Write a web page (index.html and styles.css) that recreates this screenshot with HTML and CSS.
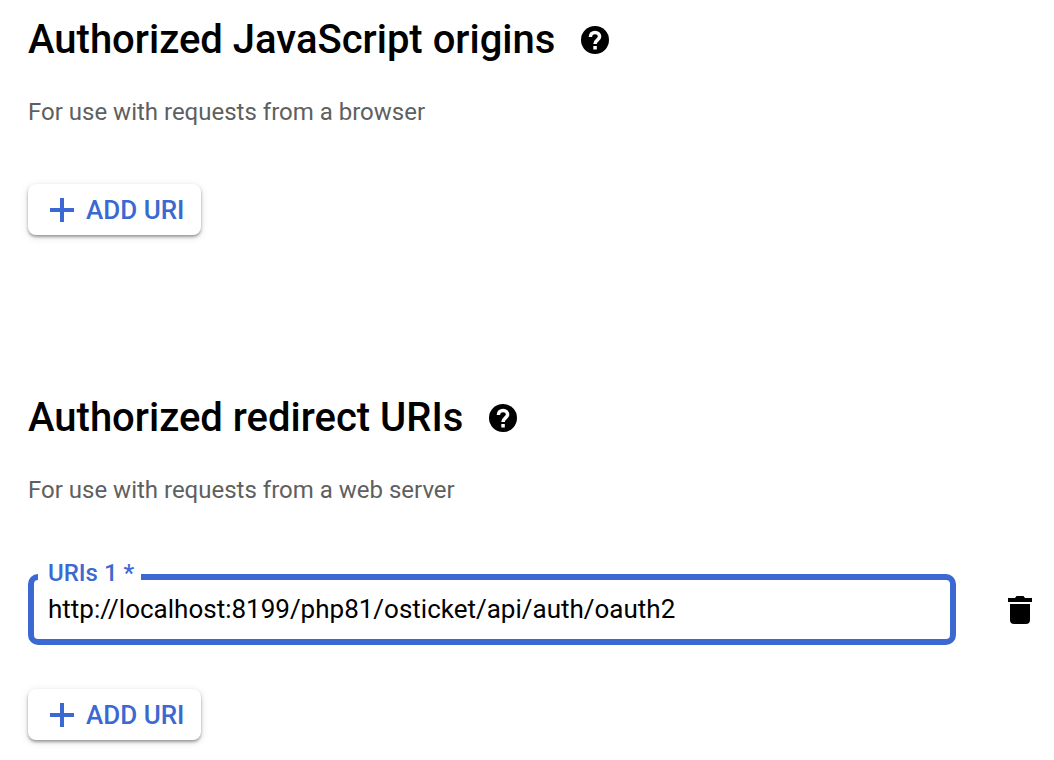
FILE: index.html
```
<!DOCTYPE html>
<html lang="en">
  <head>
    <meta charset="UTF-8" />
    <meta name="viewport" content="width=device-width, initial-scale=1.0" />
    <title>Authorized URIs</title>
    <link rel="stylesheet" href="styles.css">
  </head>
  <body>
    <main class="container">
      <section class="section">
        <header class="header">
          <h2>Authorized JavaScript origins</h2>
          <button type="button" class="icon-button" aria-label="Help: JavaScript origins">
            <svg width="28" height="28" viewBox="0 0 28 28">
              <circle cx="14" cy="14" r="14" />
              <path class="help-mark" d="M9.4 11c0-2.900 2-4.600 4.600-4.600s4.600 1.700 4.600 4.200c0 3.200-4.600 3.400-4.600 7.400" />
              <rect class="help-dot" x="12.300" y="20" width="3.500" height="3.500" />
            </svg>
          </button>
        </header>
        <p class="description">For use with requests from a browser</p>
        <button type="button" class="add-button">
          <svg width="24" height="24" viewBox="0 0 24 24"><path d="M10 0h4v10h10v4H14v10h-4V14H0v-4h10z" /></svg>
          ADD URI
        </button>
      </section>

      <section class="section">
        <header class="header">
          <h2>Authorized redirect URIs</h2>
          <button type="button" class="icon-button" aria-label="Help: redirect URIs">
            <svg width="28" height="28" viewBox="0 0 28 28">
              <circle cx="14" cy="14" r="14" />
              <path class="help-mark" d="M9.4 11c0-2.900 2-4.600 4.600-4.600s4.600 1.700 4.600 4.200c0 3.200-4.600 3.400-4.600 7.400" />
              <rect class="help-dot" x="12.300" y="20" width="3.500" height="3.500" />
            </svg>
          </button>
        </header>
        <p class="description">For use with requests from a web server</p>
        <div class="uri-row">
          <div class="field">
            <label for="uri1">URIs 1 *</label>
            <input type="text" id="uri1" value="http://localhost:8199/php81/osticket/api/auth/oauth2" spellcheck="false" required />
          </div>
          <button type="button" class="icon-button" aria-label="Delete URI">
            <svg width="24" height="28" viewBox="0 0 24 28">
              <path d="M0 2h7l1.500-2h7L17 2h7v4H0z" />
              <path d="M2 8h20v16c0 2.500-1.500 4-4 4H6c-2.500 0-4-1.500-4-4z" />
            </svg>
          </button>
        </div>
        <button type="button" class="add-button">
          <svg width="24" height="24" viewBox="0 0 24 24"><path d="M10 0h4v10h10v4H14v10h-4V14H0v-4h10z" /></svg>
          ADD URI
        </button>
      </section>
    </main>
  </body>
</html>
```

FILE: styles.css
```
* {
  margin: 0;
  padding: 0;
  box-sizing: border-box;
}

body {
  background: #fff;
  color: #000;
  font-family: Roboto, "Liberation Sans", sans-serif;
}

.container {
  padding: 16px 22px 20px 28px;
}

.section + .section {
  margin-top: 159px;
}

.header {
  display: flex;
  align-items: center;
  gap: 26px;
}

.header h2 {
  font-size: 40px;
  font-weight: 500;
  line-height: 48px;
}

.icon-button {
  display: flex;
  flex-shrink: 0;
  background: none;
  border: none;
  cursor: pointer;
}

.help-mark {
  fill: none;
  stroke: #fff;
  stroke-width: 3.5;
}

.help-dot {
  fill: #fff;
}

.description {
  margin-top: 32px;
  font-size: 24px;
  line-height: 32px;
  color: #5f5f5f;
}

.add-button {
  display: flex;
  align-items: center;
  gap: 12px;
  height: 51px;
  margin-top: 56px;
  padding: 0 17px 0 22px;
  background: #fff;
  border: none;
  border-radius: 8px;
  box-shadow: 0 2px 3px rgba(0, 0, 0, 0.34), 0 2px 8px rgba(0, 0, 0, 0.12);
  color: #3b69d1;
  font-family: inherit;
  font-size: 26px;
  font-weight: 500;
  cursor: pointer;
}

.add-button svg {
  fill: #3b69d1;
}

.uri-row {
  display: flex;
  align-items: center;
  gap: 52px;
  margin-top: 68px;
}

.uri-row + .add-button {
  margin-top: 44px;
}

.field {
  position: relative;
  flex: 1;
}

/* label sits over the top border of the input */
.field label {
  position: absolute;
  top: -15px;
  left: 10px;
  padding: 0 7px 0 10px;
  background: #fff;
  color: #3b69d1;
  font-size: 24px;
  font-weight: 500;
  line-height: 28px;
}

.field input {
  display: block;
  width: 100%;
  height: 71px;
  padding: 0 14px 2px;
  background: #fff;
  border: 6px solid #3b69d1;
  border-radius: 10px;
  outline: none;
  color: #000;
  font-family: inherit;
  font-size: 26px;
}
```
